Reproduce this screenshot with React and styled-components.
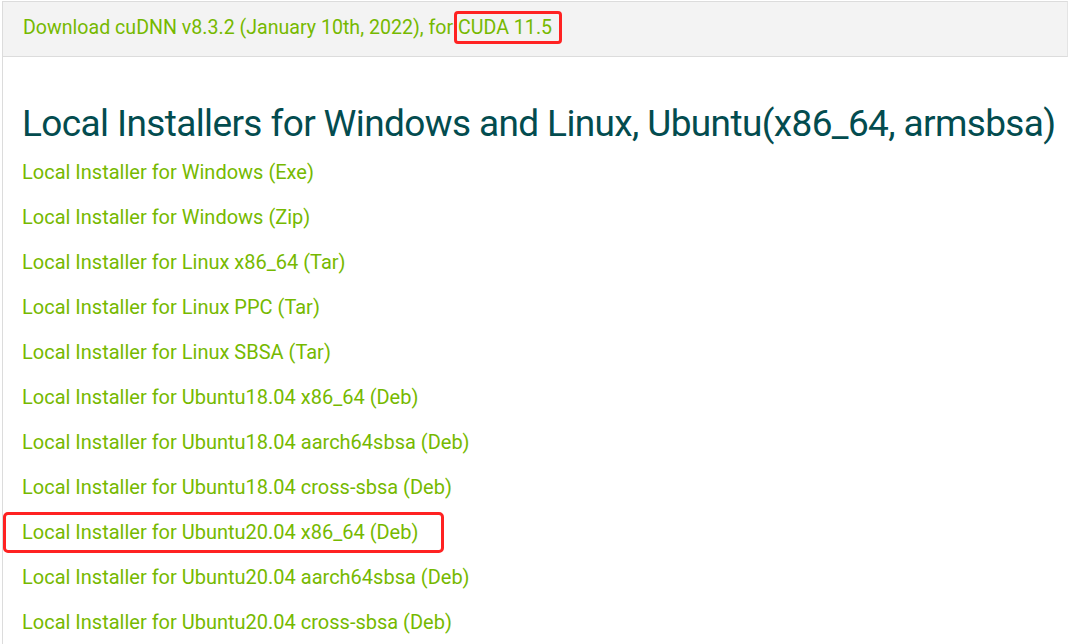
import React from 'react'
import styled, { createGlobalStyle } from 'styled-components'

const GlobalStyle = createGlobalStyle`
    body {
        margin: 0;
        background: #ffffff;
        font-family: Roboto, "Liberation Sans", sans-serif;
    }
`

const Page = styled.div`
    width: 1069px;
    height: 644px;
    overflow: hidden;
    padding: 1px 0 0 2px;
    box-sizing: border-box;
`

const Header = styled.div`
    display: flex;
    align-items: center;
    height: 50px;
    padding: 0 0 4px 20px;
    background: #f3f3f3;
    border: 1px solid #dcdcdc;
    border-right-color: #e4e4e4;
    margin-right: 1px;
    font-size: 19.6px;
    color: #76b900;
    white-space: nowrap;
`

const Mark = styled.span`
    display: inline-block;
    margin-left: 1px;
    padding: 2px 7px 2px 1px;
    line-height: 23px;
    border: 3px solid #ff2222;
    border-radius: 4px;
`

const Body = styled.div`
    border-left: 1px solid #dcdcdc;
    padding: 43px 0 0 19px;
`

const Title = styled.h2`
    margin: 0 0 3px;
    font-size: 37px;
    letter-spacing: -0.62px;
    font-weight: 400;
    line-height: 47px;
    color: #034c4f;
    white-space: nowrap;
`

const List = styled.div`
    display: flex;
    flex-direction: column;
`

const Row = styled.a`
    display: block;
    height: 45px;
    line-height: 45px;
    font-size: 20px;
    color: #76b900;
    text-decoration: none;
    white-space: nowrap;
    box-sizing: border-box;
    ${({ $boxed }) =>
        $boxed &&
        `
        width: 441px;
        margin-left: -19px;
        padding-left: 16px;
        border: 3px solid #ff2222;
        border-radius: 5px;
        height: 41px;
        line-height: 35px;
        margin-top: 2px;
        margin-bottom: 2px;
    `}
`

const items = [
    'Local Installer for Windows (Exe)',
    'Local Installer for Windows (Zip)',
    'Local Installer for Linux x86_64 (Tar)',
    'Local Installer for Linux PPC (Tar)',
    'Local Installer for Linux SBSA (Tar)',
    'Local Installer for Ubuntu18.04 x86_64 (Deb)',
    'Local Installer for Ubuntu18.04 aarch64sbsa (Deb)',
    'Local Installer for Ubuntu18.04 cross-sbsa (Deb)',
    'Local Installer for Ubuntu20.04 x86_64 (Deb)',
    'Local Installer for Ubuntu20.04 aarch64sbsa (Deb)',
    'Local Installer for Ubuntu20.04 cross-sbsa (Deb)',
]

const App = () => (
    <Page>
        <GlobalStyle />
        <Header>
            Download cuDNN v8.3.2 (January 10th, 2022), for
            <Mark>CUDA 11.5</Mark>
        </Header>
        <Body>
            <Title>
                Local Installers for Windows and Linux, Ubuntu(x86_64, armsbsa)
            </Title>
            <List>
                {items.map((text, i) => (
                    <Row key={text} href="#" $boxed={i === 8}>
                        {text}
                    </Row>
                ))}
            </List>
        </Body>
    </Page>
)

export default App
